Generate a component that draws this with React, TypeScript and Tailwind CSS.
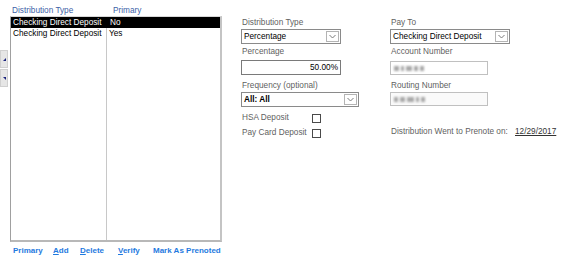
import React from "react";

const font = { fontFamily: '"Liberation Sans", Arial, sans-serif' };

function Chevron() {
  return (
    <svg width="7" height="5" viewBox="0 0 7 5">
      <path d="M0.5 1 L3.5 4 L6.5 1" fill="none" stroke="#7a7a7a" strokeWidth="1" />
    </svg>
  );
}

function Select({ value, w, bold }: { value: string; w: string; bold?: boolean }) {
  return (
    <div className={`${w} h-[15px] border border-[#8a8a8a] bg-white flex items-center`}>
      <span className={`flex-1 pl-[2px] text-[8.25px] leading-[10px] text-black ${bold ? "font-semibold" : ""}`}>{value}</span>
      <div className="w-[13px] h-[11px] mr-[1px] border border-[#b4b4b4] bg-white flex items-center justify-center">
        <Chevron />
      </div>
    </div>
  );
}

function Blurred({ parts }: { parts: number[] }) {
  return (
    <div className="flex items-center gap-[2px] pl-[3px] blur-[0.8px]">
      {parts.map((p, i) => (
        <div key={i} className="h-[5px] bg-[#a8a8a8]" style={{ width: p }} />
      ))}
    </div>
  );
}

function Check() {
  return <div className="w-[9px] h-[9px] border border-[#4a4a4a] bg-white" />;
}

export default function App() {
  return (
    <div className="w-[565px] h-[261px] bg-white flex overflow-hidden" style={font}>
      {/* left */}
      <div className="w-[222px] flex">
        <div className="w-[10px] flex flex-col pt-[50px] gap-[1px]">
          <div className="w-[8px] h-[18px] bg-[#e6e6e6] border border-[#d0d0d0] flex items-center justify-end pr-[1px]">
            <svg width="3" height="3" viewBox="0 0 3 3"><path d="M0 3 L3 3 L3 0 Z" fill="#1a237e" /></svg>
          </div>
          <div className="w-[8px] h-[18px] bg-[#e6e6e6] border border-[#d0d0d0] flex items-center justify-end pr-[1px]">
            <svg width="3" height="3" viewBox="0 0 3 3"><path d="M0 0 L3 0 L3 3 Z" fill="#1a237e" /></svg>
          </div>
        </div>
        <div className="w-[212px] flex flex-col">
          <div className="h-[16px] pt-[6px] flex text-[8.25px] leading-[10px] text-[#3d5fa8]">
            <span className="w-[103px] pl-[2px]">Distribution Type</span>
            <span>Primary</span>
          </div>
          <div className="h-[226px] border-l border-l-[#a0a0a0] border-r-2 border-r-[#c4c4c4] border-b-2 border-b-[#b8b8b8] border-t border-t-[#d8d8d8] flex flex-col">
            <div className="h-[11px] bg-black flex text-white text-[8.25px] leading-[11px]">
              <span className="w-[96px] pl-[2px]">Checking Direct Deposit</span>
              <span className="pl-[3px]">No</span>
            </div>
            <div className="h-[11px] flex text-black text-[8.25px] leading-[11px]">
              <span className="w-[96px] pl-[2px] border-r border-[#c8c8c8]">Checking Direct Deposit</span>
              <span className="pl-[2px]">Yes</span>
            </div>
            <div className="flex-1 flex">
              <div className="w-[96px] border-r border-[#c8c8c8]" />
            </div>
          </div>
          <div className="flex pt-[4px] text-[8px] leading-[10px] font-bold text-[#1f7ae0]">
            <span className="w-[40px] ml-[3px]">Primary</span>
            <span className="w-[27px]"><span className="underline">A</span>dd</span>
            <span className="w-[38px]"><span className="underline">D</span>elete</span>
            <span className="w-[35px]"><span className="underline">V</span>erify</span>
            <span>Mark As Prenoted</span>
          </div>
        </div>
      </div>

      {/* right */}
      <div className="ml-[19px] flex text-[8.25px] leading-[10px] text-[#5f5f5f]">
        <div className="w-[149px] flex flex-col pt-[18px]">
          <span className="pl-[1px]">Distribution Type</span>
          <div className="mt-[1px]"><Select value="Percentage" w="w-[100px]" /></div>
          <span className="pl-[1px] mt-[3px]">Percentage</span>
          <div className="mt-[3px] w-[100px] h-[15px] border border-[#7a7a7a] bg-white flex items-center justify-end pr-[2px] text-black">
            50.00%
          </div>
          <span className="pl-[1px] mt-[6px]">Frequency (optional)</span>
          <div className="mt-[1px]"><Select value="All: All" w="w-[118px]" bold /></div>
          <div className="mt-[6px] flex items-center h-[10px]">
            <span className="w-[71px] pl-[1px]">HSA Deposit</span>
            <Check />
          </div>
          <div className="mt-[5px] flex items-center h-[10px]">
            <span className="w-[71px] pl-[1px]">Pay Card Deposit</span>
            <Check />
          </div>
        </div>
        <div className="flex flex-col pt-[18px]">
          <span className="pl-[1px]">Pay To</span>
          <div className="mt-[1px]"><Select value="Checking Direct Deposit" w="w-[120px]" /></div>
          <span className="pl-[1px] mt-[3px]">Account Number</span>
          <div className="mt-[4px] w-[98px] h-[14px] border border-[#c0c0c0] bg-white flex items-center">
            <Blurred parts={[5, 3, 6, 4, 4]} />
          </div>
          <span className="pl-[1px] mt-[6px]">Routing Number</span>
          <div className="mt-[1px] w-[98px] h-[14px] border border-[#c0c0c0] bg-[#fafafa] flex items-center">
            <Blurred parts={[4, 5, 7, 3, 4]} />
          </div>
          <div className="mt-[21px] flex">
            <span className="w-[125px] pl-[1px]">Distribution Went to Prenote on:</span>
            <span className="underline text-[#333]">12/29/2017</span>
          </div>
        </div>
      </div>
    </div>
  );
}
